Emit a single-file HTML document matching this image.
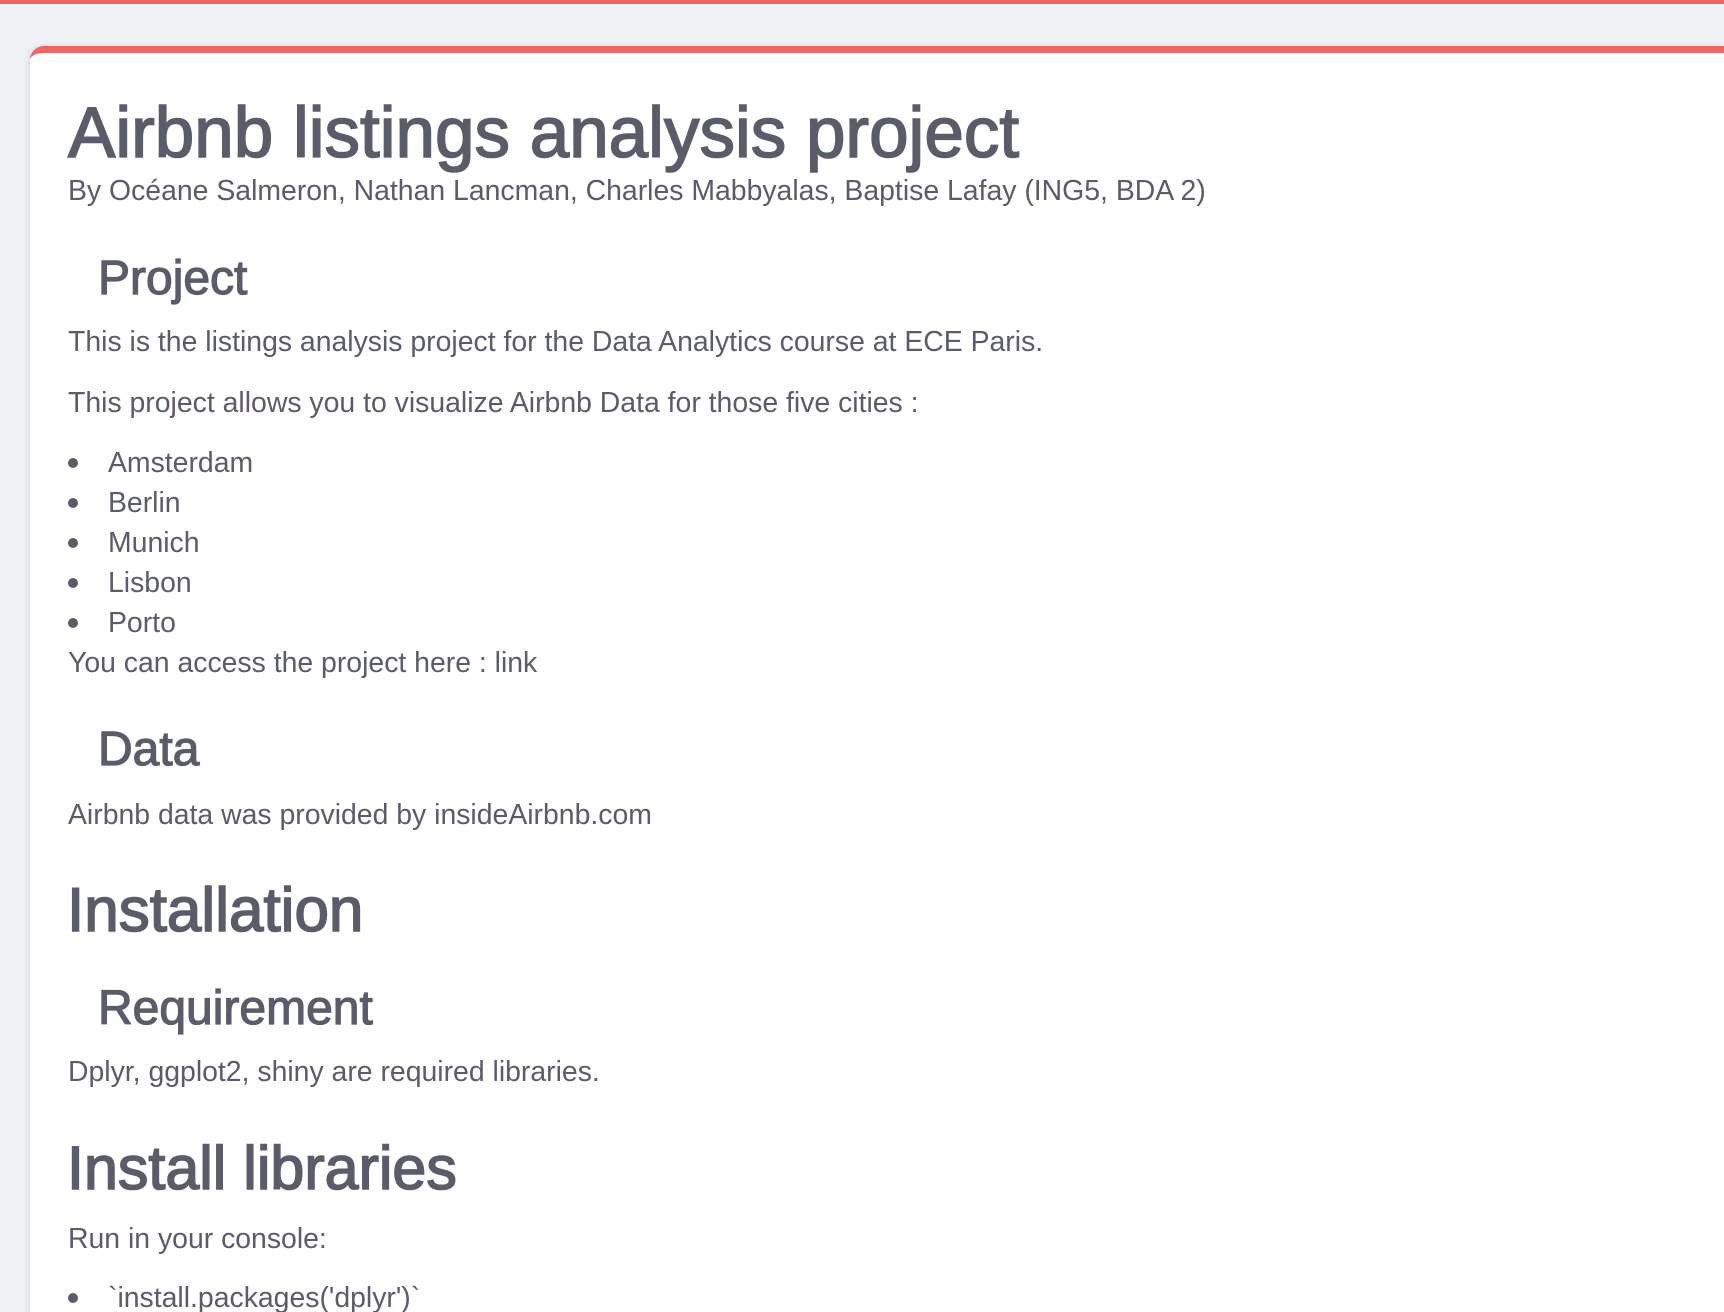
<!DOCTYPE html>
<html><head><meta charset="utf-8"><style>
html,body{margin:0;padding:0;width:1724px;height:1312px;overflow:hidden;background:#f1f2f6;font-family:"Liberation Sans",Arial,sans-serif;color:#5a5c69;position:relative}
.topbar{position:absolute;left:0;top:0;width:1724px;height:4px;background:#ee6565}
.card{position:absolute;left:30px;top:46px;width:1694px;height:1266px;background:#fff;border-radius:14px 0 0 0;border-top:7px solid #ee6565;box-shadow:-2px 0 6px rgba(120,125,150,.18)}
.t{position:absolute;white-space:nowrap;line-height:1}
.h1{font-size:71px;font-weight:normal;-webkit-text-stroke:1.6px #5a5c69;letter-spacing:0}
.h2{font-size:48px;font-weight:normal;-webkit-text-stroke:1.2px #5a5c69}
.p{font-size:28.4px}
.dot{position:absolute;width:10px;height:10px;border-radius:50%;background:#5a5c69}
</style></head><body>
<div class="topbar"></div>
<div class="card"></div>
<div class="t h1" style="left:68px;top:98px">Airbnb listings analysis project</div>
<div class="t p" style="left:68px;top:177px">By Océane Salmeron, Nathan Lancman, Charles Mabbyalas, Baptise Lafay (ING5, BDA 2)</div>
<div class="t h2" style="left:98px;top:255px">Project</div>
<div class="t p" style="left:68px;top:328px">This is the listings analysis project for the Data Analytics course at ECE Paris.</div>
<div class="t p" style="left:68px;top:389px">This project allows you to visualize Airbnb Data for those five cities :</div>
<div class="dot" style="left:68px;top:458px"></div><div class="t p" style="left:108px;top:449px">Amsterdam</div>
<div class="dot" style="left:68px;top:498px"></div><div class="t p" style="left:108px;top:489px">Berlin</div>
<div class="dot" style="left:68px;top:538px"></div><div class="t p" style="left:108px;top:529px">Munich</div>
<div class="dot" style="left:68px;top:578px"></div><div class="t p" style="left:108px;top:569px">Lisbon</div>
<div class="dot" style="left:68px;top:618px"></div><div class="t p" style="left:108px;top:609px">Porto</div>
<div class="t p" style="left:68px;top:649px">You can access the project here : link</div>
<div class="t h2" style="left:98px;top:726px">Data</div>
<div class="t p" style="left:68px;top:801px">Airbnb data was provided by insideAirbnb.com</div>
<div class="t h1" style="left:67px;top:880px;font-size:62px">Installation</div>
<div class="t h2" style="left:98px;top:985px">Requirement</div>
<div class="t p" style="left:68px;top:1058px">Dplyr, ggplot2, shiny are required libraries.</div>
<div class="t h1" style="left:67px;top:1138px;font-size:61px">Install libraries</div>
<div class="t p" style="left:68px;top:1225px">Run in your console:</div>
<div class="dot" style="left:68px;top:1293px"></div><div class="t p" style="left:108px;top:1284px">`install.packages('dplyr')`</div>
</body></html>
